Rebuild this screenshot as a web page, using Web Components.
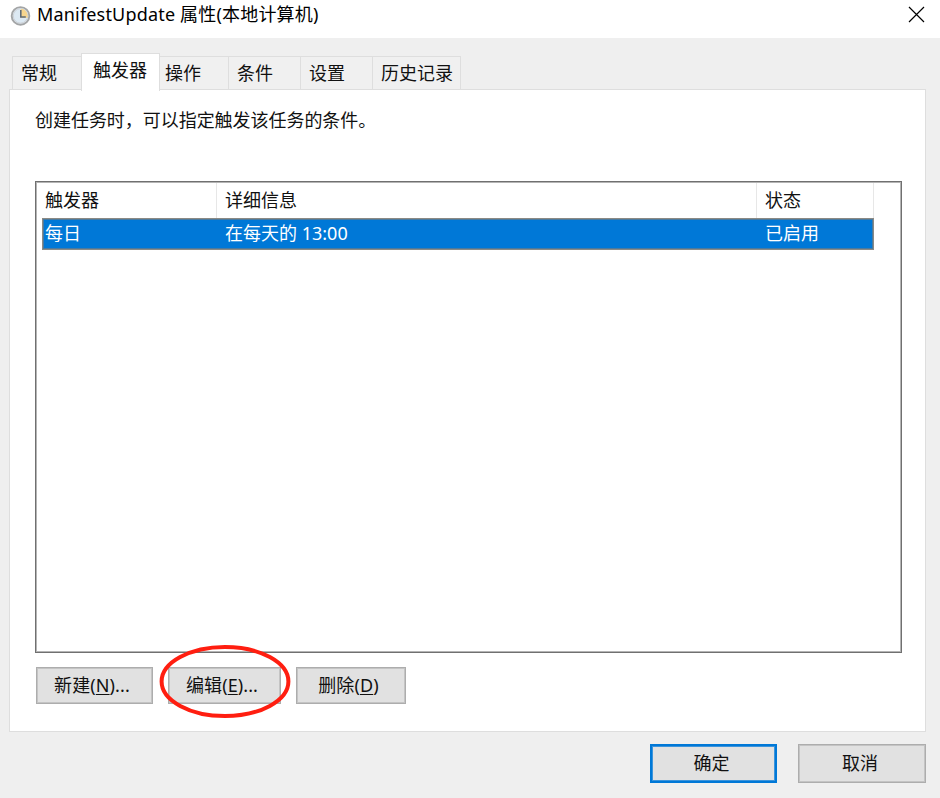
<!DOCTYPE html>
<html lang="zh-CN">
<head>
<meta charset="utf-8">
<title>ManifestUpdate 属性(本地计算机)</title>
<style>
body{margin:0;background:#efefef;color:#111;font:18px/24px "Noto Sans","Noto Sans CJK SC",sans-serif;overflow:hidden}
</style>
</head>
<body>
<task-dialog></task-dialog>
<script>
const define = (name, html) => customElements.define(name, class extends HTMLElement {
  constructor() {
    super();
    const t = document.createElement('template');
    t.innerHTML = html;
    this.attachShadow({mode: 'open'}).append(t.content.cloneNode(true));
  }
});

define('title-bar', `
<style>
:host{display:flex;height:38px;background:#fff;color:#000;box-sizing:border-box;padding:0 15px 0 10px;align-items:flex-start}
.clock{margin-top:5px;flex:none}
.t{margin:2px 0 0 6px;flex:1;white-space:nowrap;letter-spacing:.18px}
.x{margin-top:6px;flex:none}
</style>
<svg class="clock" width="21" height="21" viewBox="0 0 21 21">
<circle cx="10.5" cy="10.9" r="8.8" fill="#dfe9f2" stroke="#a3a5a6" stroke-width="1.9"/>
<circle cx="10.5" cy="10.9" r="7.2" fill="#dce9f3" stroke="#c9cccf" stroke-width=".8"/>
<path d="M10.8 3.8a7 7 0 0 1 6.9 7.4v1.6h-6.9z" fill="#f6d58e"/>
<path d="M10.8 5v7h5" fill="none" stroke="#5f6b77" stroke-width="1.6"/>
</svg>
<span class="t"><slot></slot></span>
<svg class="x" width="17" height="17" viewBox="0 0 17 17"><path d="M1 1l15 15M16 1L1 16" stroke="#000" stroke-width="1.2"/></svg>`);

define('tab-item', `
<style>
:host{display:block;box-sizing:border-box;height:33px;padding:4px 0 0 8px;border:1px solid #dedede;border-width:1px 1px 0 0;background:#f0f0f0;white-space:nowrap;width:var(--w)}
:host([first]){border-left-width:1px}
:host([selected]){height:38px;background:#fff;border-width:1px 1px 0 1px;margin:0 0 -2px -1px;padding:4px 0 0 11px;position:relative}
</style><slot></slot>`);

define('tab-strip', `
<style>:host{display:flex;align-items:flex-end;height:36px;padding-left:12px}</style><slot></slot>`);

define('push-button', `
<style>
:host{display:flex;justify-content:center;box-sizing:border-box;width:var(--w);height:37px;padding:5px 5px 0 0;border:1px solid #adadad;box-shadow:inset 0 0 0 1px #c4c4c4;background:#e1e1e1;white-space:nowrap;letter-spacing:.1px}
:host([wide]){height:39px;padding:6px 4px 0 0}
:host([primary]){border:2px solid #0078d7;padding-top:5px;box-shadow:inset 0 0 0 1px #3c94db}
</style><span><slot></slot></span>`);

define('list-row', `
<style>
:host{display:grid;grid-template-columns:175px 540px 117px;box-sizing:border-box;height:35px;line-height:24px}
::slotted(span){box-sizing:border-box;padding:5px 0 0 8px;border-right:1px solid #e7e7e7;white-space:nowrap}
::slotted(span:first-child){padding-left:3px}
:host([selected]){width:832px;height:32px;background:#0078d7;border:1px solid #8b8a85;box-shadow:inset 0 0 0 1px #4a7a9f;color:#fff}
:host([selected]) ::slotted(span){border:0;padding-top:2px;padding-left:7px}
:host([selected]) ::slotted(span:first-child){padding-left:2px}
</style><slot></slot>`);

define('trigger-list', `
<style>:host{display:block;box-sizing:border-box;width:867px;height:472px;border:1px solid #707070;box-shadow:inset 0 0 0 1px #b4b4b4;padding:1px 0 0 6px;background:#fff}</style><slot></slot>`);

define('red-mark', `
<style>:host{position:absolute;left:-9px;top:-23px;pointer-events:none;z-index:2}svg{display:block}</style>
<svg width="132" height="76" viewBox="0 0 132 76"><ellipse cx="66" cy="37.5" rx="63.4" ry="34.5" fill="none" stroke="#ff1e10" stroke-width="4"/></svg>`);

define('task-dialog', `
<style>
:host{display:block;width:940px;height:798px}
tab-strip{margin-top:15px}
.panel{box-sizing:border-box;width:917px;height:643px;margin-left:9px;border:1px solid #dedede;background:#fff;padding:18px 0 0 25px}
p{margin:0 0 49px;line-height:24px;letter-spacing:-.04px}
.actions{display:flex;margin:14px 0 0 1px}
.spot{position:relative;margin:0 15px}
.foot{display:flex;gap:21px;padding:12px 14px 0 0;justify-content:flex-end}
u{text-decoration-thickness:1px;text-underline-offset:2px}
</style>
<title-bar>ManifestUpdate 属性(本地计算机)</title-bar>
<tab-strip>
<tab-item first style="--w:70px">常规</tab-item>
<tab-item selected style="--w:79px">触发器</tab-item>
<tab-item style="--w:69px;padding-left:5px">操作</tab-item>
<tab-item style="--w:72px">条件</tab-item>
<tab-item style="--w:72px">设置</tab-item>
<tab-item style="--w:88px">历史记录</tab-item>
</tab-strip>
<div class="panel">
<p>创建任务时，可以指定触发该任务的条件。</p>
<trigger-list>
<list-row><span>触发器</span><span>详细信息</span><span>状态</span></list-row>
<list-row selected><span>每日</span><span>在每天的 13:00</span><span>已启用</span></list-row>
</trigger-list>
<div class="actions">
<push-button style="--w:117px">新建(<u>N</u>)...</push-button>
<div class="spot"><push-button style="--w:113px">编辑(<u>E</u>)...</push-button><red-mark></red-mark></div>
<push-button style="--w:110px">删除(<u>D</u>)</push-button>
</div>
</div>
<div class="foot">
<push-button wide primary style="--w:127px">确定</push-button>
<push-button wide style="--w:128px">取消</push-button>
</div>`);
</script>
</body>
</html>
